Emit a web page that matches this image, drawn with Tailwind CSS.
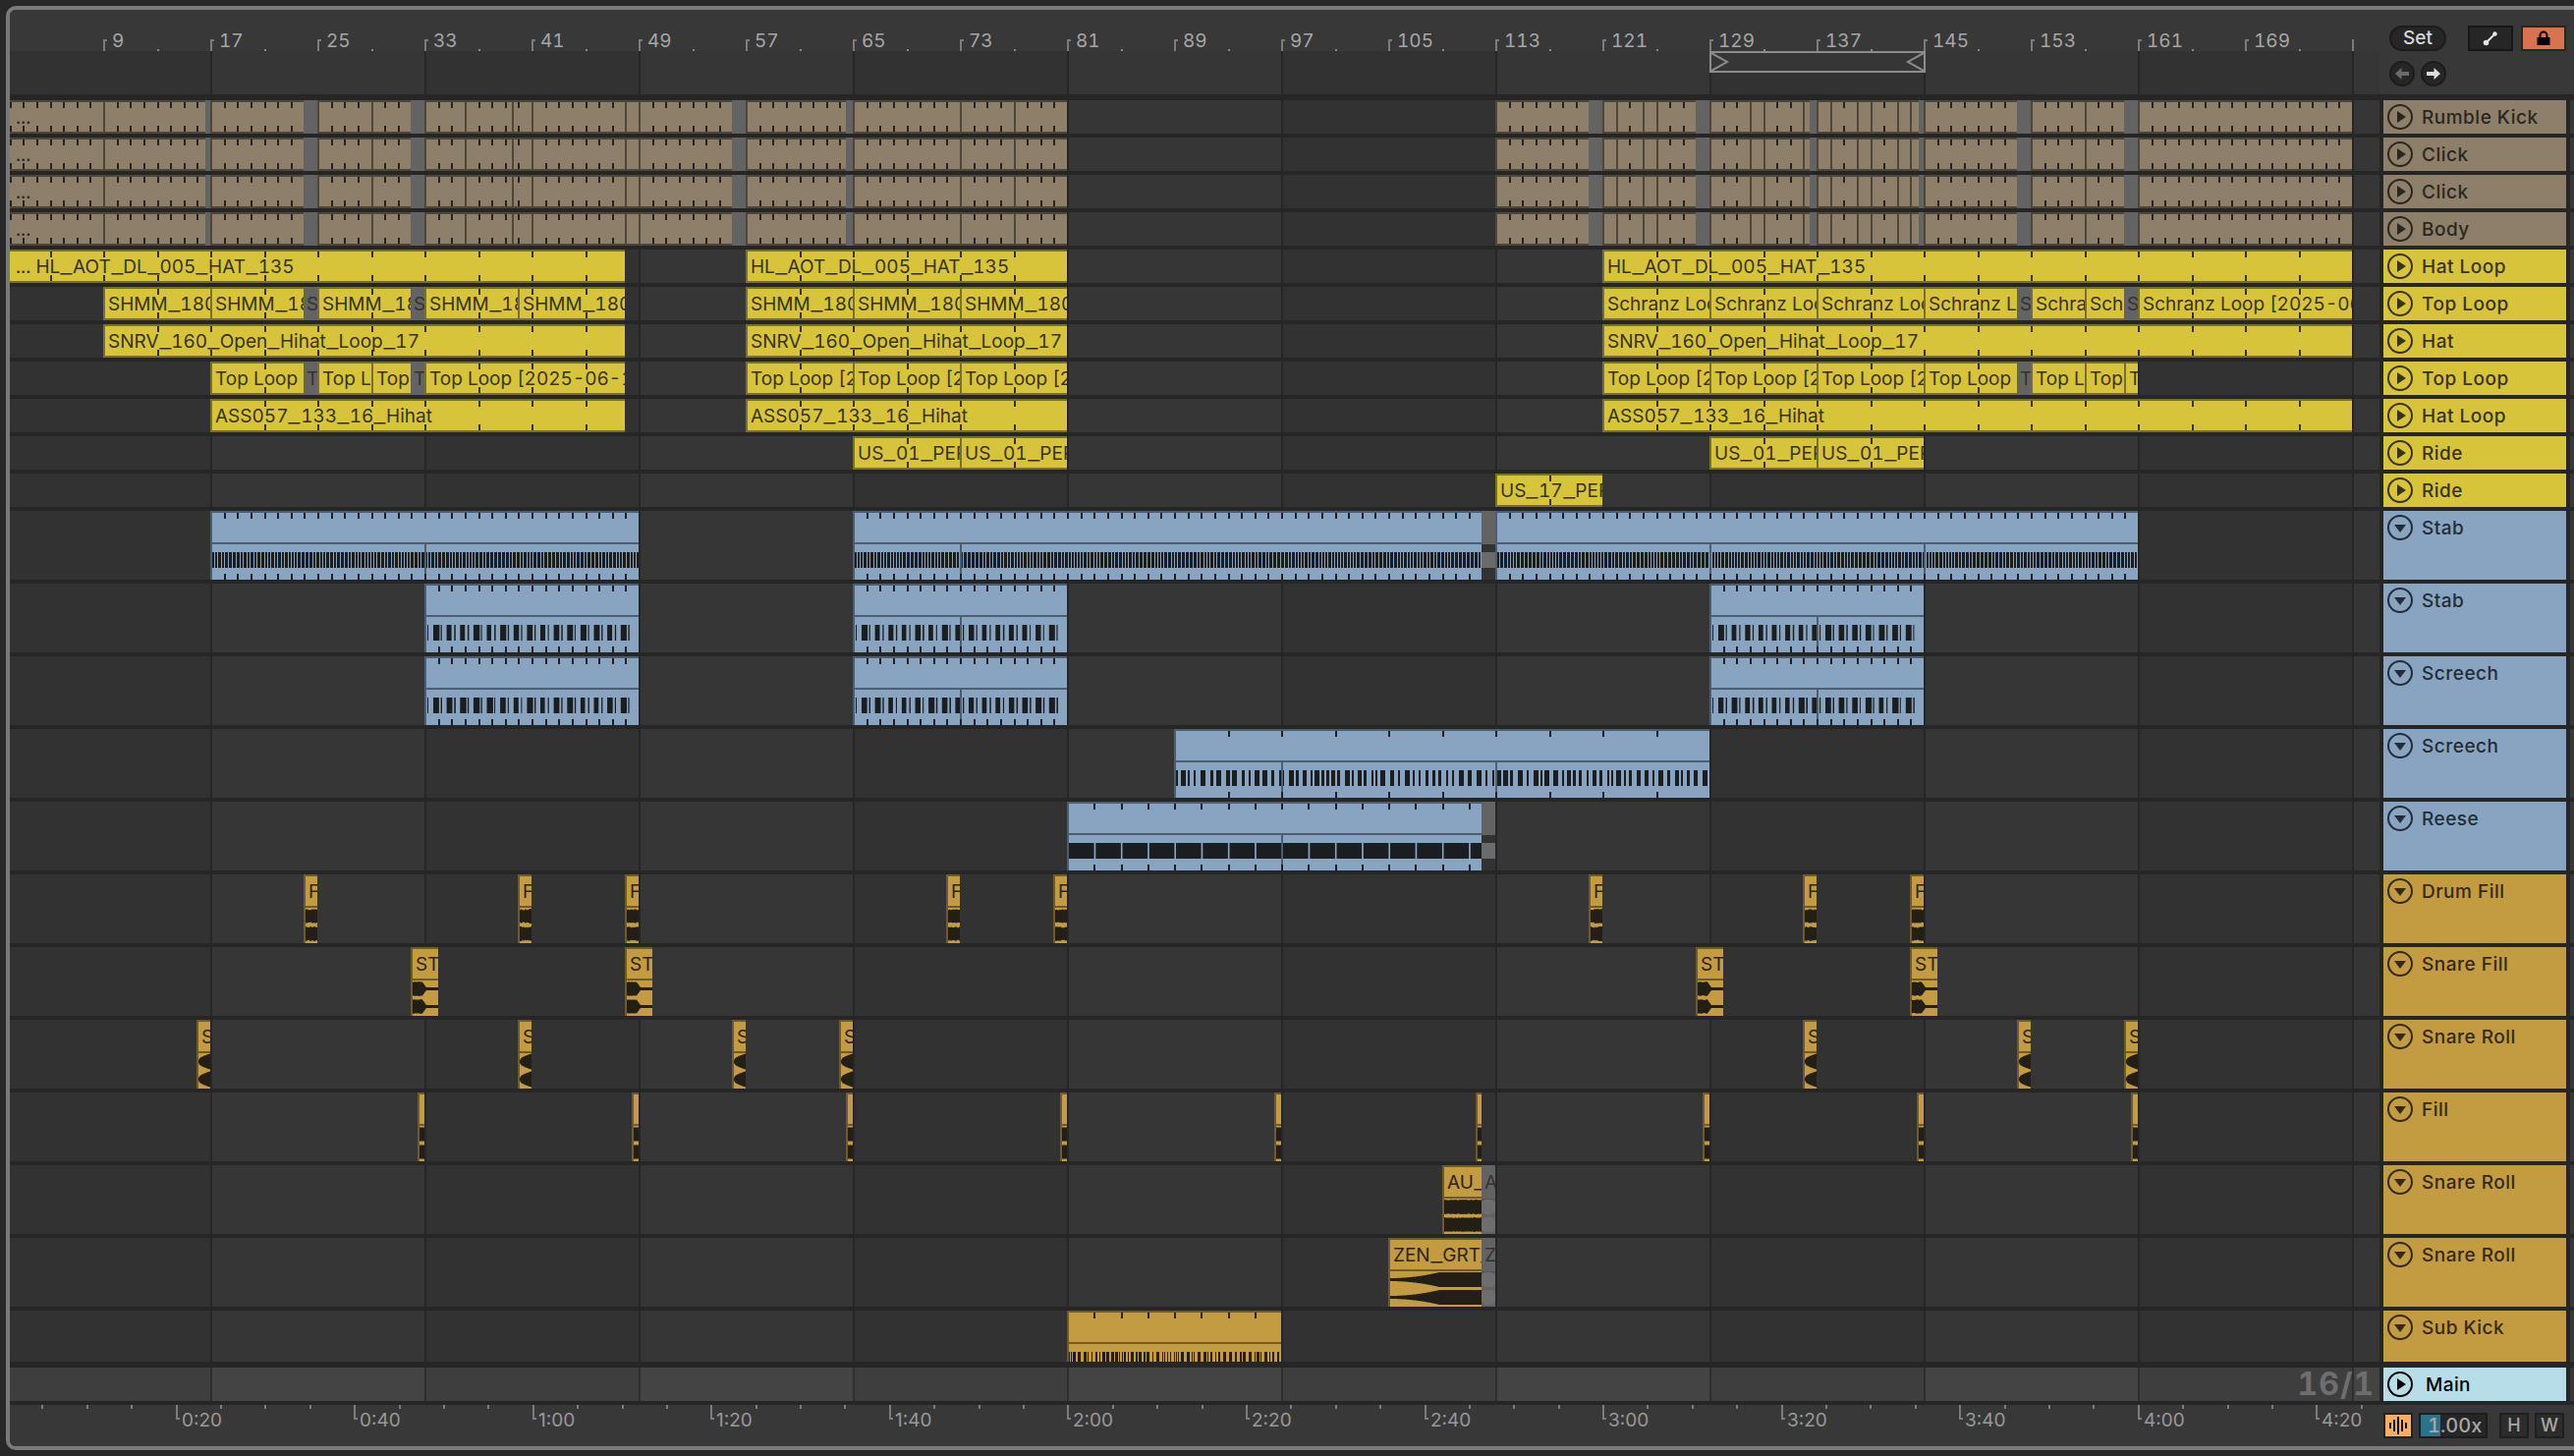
<!DOCTYPE html>
<html>
<head>
<meta charset="utf-8">
<title>Arrangement</title>
<script src="https://cdn.jsdelivr.net/npm/@tailwindcss/browser@4"></script>
</head>
<body class="bg-[#282828] font-[Inter,sans-serif] overflow-hidden">
<div class="w-[2620px] h-[1482px] pt-[6px] pl-[6px]">
  <div class="w-[2614px] h-[1470px] border-[4px] border-r-0 border-[#7a7a7a] rounded-l-[10px] bg-[#262626] overflow-hidden flex flex-col">

    <!-- beat ruler + locators -->
    <div class="flex h-[86px] shrink-0 bg-[#383838]">
      <div id="overview" class="relative w-[2412px] h-[86px]"></div>
      <div class="flex flex-col gap-[10px] pl-[10px] pt-[16px]">
        <div class="flex items-center">
          <div class="w-[58px] h-[26px] rounded-full bg-[#262626] border-2 border-[#1c1c1c] text-[#d6d6d6] text-[19px] font-medium leading-[22px] text-center">Set</div>
          <div class="ml-[22px] w-[46px] h-[26px] bg-[#262626] border-2 border-[#171717] flex items-center justify-center">
            <svg width="16" height="16" viewBox="0 0 16 16"><path d="M3 13 13 3" stroke="#e6e6e6" stroke-width="2"/><circle cx="3.5" cy="12.5" r="2.8" fill="#e6e6e6"/><circle cx="12.5" cy="3.5" r="2.2" fill="#e6e6e6"/></svg>
          </div>
          <div class="ml-[8px] w-[46px] h-[26px] bg-[#d9724f] border-2 border-[#262626] flex items-center justify-center">
            <svg width="16" height="16" viewBox="0 0 16 16"><path d="M4.5 7V5a3.5 3.5 0 0 1 7 0v2" fill="none" stroke="#000" stroke-width="2"/><rect x="1.500" y="7" width="13" height="8" fill="#000"/></svg>
          </div>
        </div>
        <div class="flex gap-[6px]">
          <div class="w-[26px] h-[26px] rounded-full bg-[#262626] border-2 border-[#1c1c1c] flex items-center justify-center">
            <svg width="16" height="14" viewBox="0 0 16 14"><path d="M7.500 1 1 7l6.500 6V9H15V5H7.500z" fill="#6b6b6b"/></svg>
          </div>
          <div class="w-[26px] h-[26px] rounded-full bg-[#262626] border-2 border-[#1c1c1c] flex items-center justify-center">
            <svg width="16" height="14" viewBox="0 0 16 14"><path d="M8.500 1 15 7l-6.500 6V9H1V5h7.500z" fill="#dcdcdc"/></svg>
          </div>
        </div>
      </div>
    </div>

    <!-- tracks -->
    <div id="tracks" class="flex flex-col gap-[4px] mt-[6px]"></div>

    <!-- main track -->
    <div class="flex h-[34px] mt-[6px] shrink-0">
      <div id="mainlane" class="relative w-[2412px] h-[34px] flex">
        <div class="absolute right-[5px] top-0 z-10 h-[34px] leading-[34px] text-[32px] font-bold tabular-nums tracking-[1px] text-[#6e6e6e]">16/1</div>
      </div>
      <div class="ml-[4px] w-[186px] h-[34px] bg-[#b7dde9] text-black flex items-start pl-[4px] pt-[4px]">
        <svg class="shrink-0" width="26" height="26" viewBox="0 0 26 26"><circle cx="13" cy="13" r="12" fill="none" stroke="currentColor" stroke-width="2"/><path d="M10 7l9 6-9 6z" fill="currentColor"/></svg>
        <span class="ml-[13px] text-[19px] font-medium leading-[28px] tracking-[0.4px]">Main</span>
      </div>
      <div class="ml-[4px] w-[4px] bg-[#383838]"></div>
    </div>

    <!-- time ruler -->
    <div class="flex h-[42px] mt-[4px] bg-[#383838] shrink-0">
      <div id="timeruler" class="relative w-[2416px] h-[42px]"></div>
      <div class="flex items-start pt-[8px]">
        <div class="w-[30px] h-[26px] bg-[#f5ae62] border-2 border-[#222] flex items-center justify-center">
          <svg width="20" height="18" viewBox="0 0 20 18" fill="#111"><rect x="1" y="6" width="2" height="6"/><rect x="5" y="3" width="2" height="12"/><rect x="9" y="0" width="2" height="18"/><rect x="13" y="3" width="2" height="12"/><rect x="17" y="6" width="2" height="6"/></svg>
        </div>
        <div class="relative ml-[6px] w-[70px] h-[26px] bg-[#262626] border-2 border-[#1c1c1c]">
          <div class="absolute left-0 top-0 w-[20px] h-[22px] bg-[#2e7289]"></div>
          <div class="absolute left-[7px] top-0 h-[22px] leading-[22px] text-[20px] font-medium tabular-nums text-[#a8a8a8]">1.00x</div>
        </div>
        <div class="ml-[12px] w-[30px] h-[26px] bg-[#2c2c2c] border-2 border-[#1f1f1f] text-[#a8a8a8] text-[18px] font-medium leading-[22px] text-center">H</div>
        <div class="ml-[6px] w-[30px] h-[26px] bg-[#2c2c2c] border-2 border-[#1f1f1f] text-[#a8a8a8] text-[18px] font-medium leading-[22px] text-center">W</div>
      </div>
    </div>
  </div>
</div>

<script>
// bar number -> x on screen
const X = b => Math.max(10, Math.round(214 + (b - 17) * 13.625));
const GRID = [214, 432, 650, 868, 1086, 1304, 1522, 1740, 1958, 2176, 2394];

const THEME = {
  tan: { clip: 'bg-[#8e7f6a] border-[#4f463a]', head: 'bg-[#8e7f6a] text-[#2b2720]', tick: 'bg-[#28241d]', line: 'bg-[#4f463a]', text: 'text-[#2b2720]', ink: '#231f17' },
  yellow: { clip: 'bg-[#d7c43b] border-[#77702f]', head: 'bg-[#d7c43b] text-[#38340f]', tick: 'bg-[#35320f]', line: 'bg-[#77702f]', text: 'text-[#38340f]', ink: '#231f17' },
  blue: { clip: 'bg-[#89a4c0] border-[#4d5e72]', head: 'bg-[#89a4c0] text-[#232d38]', tick: 'bg-[#1d2126]', line: 'bg-[#4d5e72]', text: 'text-[#232d38]', ink: '#1b1e21' },
  orange: { clip: 'bg-[#c39b40] border-[#6e5a2b]', head: 'bg-[#c39b40] text-[#352a10]', tick: 'bg-[#2b2410]', line: 'bg-[#6e5a2b]', text: 'text-[#2e2510]', ink: '#231f17' },
};

const tanClips = [[1,16.6],[16.6,17,'','g'],[17,24],[24,25,'','g'],[25,32],[32,33,'','g'],[33,56],[56,57,'','g'],[57,64.5],[64.5,65,'','g'],[65,81],
  [113,120],[120,121,'','g'],[121,128],[128,129,'','g'],[129,136.5],[136.5,137,'','g'],[137,144.6],[144.6,145,'','g'],[145,152],[152,153,'','g'],[153,160],[160,161,'','g'],[161,177]];
tanClips[0][2] = '...';
const tanLines = [9,29,36,39.5,41,48,49,65,73,77,122,124,125,132,133,136,138,140,141,143,144,157];
const L = 'HL_AOT_DL_005_HAT_135', SN = 'SNRV_160_Open_Hihat_Loop_17', AS = 'ASS057_133_16_Hihat';
const SH = 'SHMM_180_Top_Loop_01', SC = 'Schranz Loop [2025-06-12 1]', TL = 'Top Loop [2025-06-12 1]', US = 'US_01_PERC_LOOP';

const TRACKS = [
  { name: 'Rumble Kick', c: 'tan', h: 34, step: 1, lines: tanLines, clips: tanClips },
  { name: 'Click', c: 'tan', h: 34, step: 1, lines: tanLines, clips: tanClips },
  { name: 'Click', c: 'tan', h: 34, step: 1, lines: tanLines, clips: tanClips },
  { name: 'Body', c: 'tan', h: 34, step: 1, lines: tanLines, clips: tanClips },
  { name: 'Hat Loop', c: 'yellow', h: 34, step: 4, clips: [[1,48,'... ' + L],[57,81,L],[121,177,L]] },
  { name: 'Top Loop', c: 'yellow', h: 34, step: 4, clips: [[9,17,SH],[17,24,SH],[24,25,'S','g'],[25,32,SH],[32,33,'S','g'],[33,40,SH],[40,48,SH],[57,65,SH],[65,73,SH],[73,81,SH],
    [121,129,SC],[129,137,SC],[137,145,SC],[145,152,SC],[152,153,'S','g'],[153,157,SC],[157,160,SC],[160,161,'S','g'],[161,177,SC]] },
  { name: 'Hat', c: 'yellow', h: 34, step: 4, clips: [[9,48,SN],[57,81,SN],[121,177,SN]] },
  { name: 'Top Loop', c: 'yellow', h: 34, step: 4, clips: [[17,24,TL],[24,25,'T','g'],[25,29,TL],[29,32,TL],[32,33,'T','g'],[33,48,TL],[57,65,TL],[65,73,TL],[73,81,TL],
    [121,129,TL],[129,137,TL],[137,145,TL],[145,152,TL],[152,153,'T','g'],[153,157,TL],[157,160,TL],[160,161,TL]] },
  { name: 'Hat Loop', c: 'yellow', h: 34, step: 4, clips: [[17,48,AS],[57,81,AS],[121,177,AS]] },
  { name: 'Ride', c: 'yellow', h: 34, step: 4, clips: [[65,73,US],[73,81,US],[129,137,US],[137,145,US]] },
  { name: 'Ride', c: 'yellow', h: 34, step: 4, clips: [[113,121,'US_17_PERC_LOOP']] },
  { name: 'Stab', c: 'blue', h: 70, step: 1, wave: 'dense', seps: [33,73,129,145], clips: [[17,49],[65,112],[112,113,'','g'],[113,161]] },
  { name: 'Stab', c: 'blue', h: 70, step: 1, wave: 'rep', seps: [73,137], clips: [[33,49],[65,81],[129,145]] },
  { name: 'Screech', c: 'blue', h: 70, step: 1, wave: 'rep', seps: [73,137], clips: [[33,49],[65,81],[129,145]] },
  { name: 'Screech', c: 'blue', h: 70, step: 4, wave: 'mid', seps: [97,113], clips: [[89,129]] },
  { name: 'Reese', c: 'blue', h: 70, step: 2, wave: 'solid', seps: [97], clips: [[81,112],[112,113,'','g']] },
  { name: 'Drum Fill', c: 'orange', h: 70, wave: 'F', clips: [24,40,48,72,80,120,136,144].map(b => [b,b+1,'Fill']) },
  { name: 'Snare Fill', c: 'orange', h: 70, wave: 'ST', clips: [32,48,128,144].map(b => [b,b+2,'STK']) },
  { name: 'Snare Roll', c: 'orange', h: 70, wave: 'S', clips: [16,40,56,64,136,152,160].map(b => [b,b+1,'SN']) },
  { name: 'Fill', c: 'orange', h: 70, wave: 'R', clips: [32.5,48.5,64.5,80.5,96.5,111.5,128.5,144.5,160.5].map(b => [b,b+0.5,'']) },
  { name: 'Snare Roll', c: 'orange', h: 70, wave: 'AU', clips: [[109,112,'AU_SNARE'],[112,113,'A','g']] },
  { name: 'Snare Roll', c: 'orange', h: 70, wave: 'ZEN', clips: [[105,112,'ZEN_GRT_SNARE'],[112,113,'Z','g']] },
  { name: 'Sub Kick', c: 'orange', h: 52, step: 2, noBottom: true, wave: 'comb', clips: [[81,97]] },
];

// small seeded random, the same wave on every run
function rnd(seed) { let s = seed; return () => (s = (s * 16807) % 2147483647) / 2147483647; }

function stripes(w, y, h, r, wMin, wMax, gMin, gMax) {
  let d = '', x = 0;
  while (x < w) {
    const bw = wMin + Math.floor(r() * (wMax - wMin + 1));
    d += 'M' + x + ' ' + y + 'h' + Math.min(bw, w - x) + 'v' + h + 'h-' + Math.min(bw, w - x) + 'z';
    x += bw + gMin + Math.floor(r() * (gMax - gMin + 1));
  }
  return d;
}

// two channel shape, f gives half the height at x
function lobes(w, f) {
  let d = '';
  for (const c of [8.5, 26.5]) {
    let top = '', bot = '';
    for (let x = 0; x <= w; x++) { const v = f(x); top += (x ? 'L' : 'M') + x + ' ' + (c - v).toFixed(1); bot = 'L' + x + ' ' + (c + v).toFixed(1) + bot; }
    d += top + bot + 'z';
  }
  return d;
}

function waveSvg(kind, w, ink, seed) {
  const r = rnd(seed + 11);
  let d = '';
  if (kind === 'dense') d = stripes(w, 8, 16, r, 2, 3, 1, 1);
  if (kind === 'rep') {
    // the same short hit on every bar
    for (let x = 0; x < w; x += 13.625) {
      const a = 1 + r() * 0.6, b = 4.500 + r() * 2;
      if (x + 1 < w) d += 'M' + (x + 1).toFixed(1) + ' 8h' + a.toFixed(1) + 'v16h-' + a.toFixed(1) + 'z';
      if (x + 7 + b < w) d += 'M' + (x + 7).toFixed(1) + ' 8h' + b.toFixed(1) + 'v16h-' + b.toFixed(1) + 'z';
    }
  }
  if (kind === 'mid') d = stripes(w, 8, 16, r, 2, 5, 2, 5);
  if (kind === 'solid') {
    for (let x = 0; x < w; x += 27.25) d += 'M' + x.toFixed(1) + ' 8h' + Math.min(25.6, w - x).toFixed(1) + 'v16h-' + Math.min(25.6, w - x).toFixed(1) + 'z';
  }
  if (kind === 'comb') d = stripes(w, 8, 10, r, 1, 3, 1, 3);
  if (kind === 'F') d = lobes(w, x => 6 + r() * 1.6);
  if (kind === 'ST') d = lobes(w, x => x < 10 ? 6.500 + r() : x < 14 ? 7 - (x - 10) * 1.4 : 1.500);
  if (kind === 'S') d = lobes(w, x => 1 + 7 * Math.sqrt(x / Math.max(w, 1)));
  if (kind === 'R') d = lobes(w, x => 7);
  if (kind === 'AU') d = lobes(w, x => 6.600 + r());
  if (kind === 'ZEN') d = lobes(w, x => x < 50 ? 1.500 + Math.pow(x / 50, 2) * 6 : 7.500);
  return '<svg class="absolute left-0 top-[32px]" width="' + w + '" height="36" viewBox="0 0 ' + w + ' 36"><path d="' + d + '" fill="' + ink + '"/></svg>';
}

function columns(main) {
  let h = '', prev = 10;
  GRID.concat([2422]).forEach((g, i) => {
    const end = i < GRID.length ? g + 2 : 2422;
    const bg = main ? (i % 2 ? 'bg-[#444444]' : 'bg-[#3e3e3e]') : (i % 2 ? 'bg-[#363636]' : 'bg-[#323232]');
    const bd = i < GRID.length ? (main ? 'border-r-2 border-[#2e2e2e]' : 'border-r-2 border-[#262626]') : '';
    h += '<div class="h-full box-border ' + bg + ' ' + bd + '" style="width:' + (end - prev) + 'px"></div>';
    prev = end;
  });
  return h;
}

// the underscores of the clip font are wider than Inter's
function clipText(s) {
  return s.replace(/_/g, '<span class="inline-block mx-[2px] scale-x-[1.4]">_</span>');
}

function clipHtml(t, clip, idx) {
  const th = THEME[t.c], s = clip[0], e = clip[1], title = clip[2] || '', gap = clip[3] === 'g';
  const x0 = X(s), w = X(e) - x0, place = 'left:' + (x0 - 10) + 'px;width:' + w + 'px';
  const small = t.h === 34;
  if (gap) {
    if (!small && t.c === 'blue') {
      return '<div class="absolute top-0 h-[34px] bg-[#636363]" style="' + place + '"></div><div class="absolute top-[42px] h-[16px] bg-[#6b6b6b]" style="' + place + '"></div>';
    }
    let inner = title ? '<span class="absolute left-[3px] top-[1px] h-[34px] leading-[34px] text-[19px] text-[#333333] whitespace-nowrap">' + title + '</span>' : '';
    if (!small) inner += '<div class="absolute left-0 right-0 top-[34px] h-[2px] bg-[#565656]"></div><div class="absolute left-0 right-0 top-[35px] h-[15px] rounded-[5px] bg-[#6e6e6e]"></div><div class="absolute left-0 right-0 top-[53px] h-[15px] rounded-[5px] bg-[#6e6e6e]"></div>';
    return '<div class="absolute top-0 h-full overflow-hidden bg-[#636363]" style="' + place + '">' + inner + '</div>';
  }
  const first = s === 1;
  let h = '<div class="absolute top-0 h-full overflow-hidden box-border border-t-2 ' + (first ? '' : 'border-l-2 ') + (small ? 'border-b-2 ' : '') + th.clip + '" style="' + place + '">';
  const off = first ? 0 : 2;
  if (t.step) {
    for (let b = Math.ceil(s + 0.01); b < e; b++) {
      if ((b - 1) % t.step) continue;
      const tx = X(b) - x0 - off;
      h += '<div class="absolute top-0 w-[2px] h-[6px] ' + th.tick + '" style="left:' + tx + 'px"></div>';
      if (!t.noBottom) h += '<div class="absolute bottom-0 w-[2px] h-[6px] ' + th.tick + '" style="left:' + tx + 'px"></div>';
    }
  }
  if (t.lines) for (const b of t.lines) if (b > s && b < e) h += '<div class="absolute top-0 bottom-0 w-[2px] ' + th.line + '" style="left:' + (X(b) - x0 - off) + 'px"></div>';
  if (!small) {
    h += '<div class="absolute left-0 right-0 top-[30px] h-[2px] ' + th.line + '"></div>';
    h += waveSvg(t.wave, w - off, th.ink, idx * 37 + 5);
    if (t.seps) for (const b of t.seps) if (b > s && b < e) h += '<div class="absolute top-[32px] h-[30px] w-[2px] ' + th.line + '" style="left:' + (X(b) - x0 - off) + 'px"></div>';
  }
  if (title) h += '<span class="absolute top-[1px] h-[30px] leading-[30px] whitespace-nowrap text-[19px] tabular-nums ' + (first ? 'left-[6px] ' : 'left-[3px] ') + th.text + '">' + clipText(title) + '</span>';
  return h + '</div>';
}

function icon(down) {
  return '<svg class="shrink-0" width="26" height="26" viewBox="0 0 26 26"><circle cx="13" cy="13" r="12" fill="none" stroke="currentColor" stroke-width="2"/><path d="' + (down ? 'M7 10h12l-6 8z' : 'M10 7l9 6-9 6z') + '" fill="currentColor"/></svg>';
}

let out = '';
TRACKS.forEach((t, ti) => {
  out += '<div class="flex shrink-0" style="height:' + t.h + 'px">';
  out += '<div class="relative flex w-[2412px] h-full">' + columns(false);
  t.clips.forEach((c, i) => { out += clipHtml(t, c, ti * 17 + i); });
  out += '</div>';
  out += '<div class="ml-[4px] w-[186px] h-full flex items-start pl-[4px] pt-[4px] ' + THEME[t.c].head + '">' + icon(t.h > 34) + '<span class="ml-[9px] text-[19px] font-medium leading-[28px] tracking-[0.5px]">' + t.name + '</span></div>';
  out += '<div class="ml-[4px] w-[4px] h-full bg-[#383838]"></div></div>';
});
document.getElementById('tracks').innerHTML = out;
document.getElementById('mainlane').insertAdjacentHTML('afterbegin', columns(true));

// beat ruler: top band with numbers, locator band with the grid under it
let ov = '<div class="absolute left-0 top-[42px] flex w-full h-[44px]">' + columns(false) + '</div>';
for (let b = 9; b <= 169; b += 8) {
  const x = X(b) - 10;
  ov += '<div class="absolute top-[30px] w-[2px] h-[12px] bg-[#7c7c7c]" style="left:' + x + 'px"></div>';
  ov += '<div class="absolute top-[30px] w-[4px] h-[2px] bg-[#7c7c7c]" style="left:' + x + 'px"></div>';
  ov += '<div class="absolute top-[22px] h-[20px] leading-[20px] text-[19px] tabular-nums text-[#a6a6a6]" style="left:' + (x + 9) + 'px">' + b + '</div>';
  ov += '<div class="absolute top-[40px] w-[2px] h-[2px] bg-[#8a8a8a]" style="left:' + (X(b + 4) - 10) + 'px"></div>';
}
ov += '<div class="absolute top-[30px] w-[2px] h-[12px] bg-[#7c7c7c]" style="left:' + (2394 - 10) + 'px"></div>';
// loop brace 129 - 145
ov += '<div class="absolute left-[1730px] top-[42px] w-[220px] h-[22px] box-border border-2 border-[#8c8c8c] bg-[#363636]">'
  + '<svg class="absolute left-0 top-0" width="216" height="18" viewBox="0 0 216 18"><path d="M0 0 16 9 0 18" fill="none" stroke="#8c8c8c" stroke-width="2"/><path d="M216 0 200 9 216 18" fill="none" stroke="#8c8c8c" stroke-width="2"/></svg></div>';
document.getElementById('overview').innerHTML = ov;

// time ruler
let tr = '';
const T0 = 178.6, STEP = 45.39;
const names = ['0:20','0:40','1:00','1:20','1:40','2:00','2:20','2:40','3:00','3:20','3:40','4:00','4:20'];
for (let k = -3; T0 + k * STEP < 2410; k++) {
  const x = Math.round(T0 + k * STEP) - 10;
  if (k >= 0 && k % 4 === 0) {
    tr += '<div class="absolute top-0 w-[2px] h-[15px] bg-[#7c7c7c]" style="left:' + x + 'px"></div>';
    tr += '<div class="absolute top-[13px] w-[4px] h-[2px] bg-[#7c7c7c]" style="left:' + x + 'px"></div>';
    tr += '<div class="absolute top-[6px] h-[20px] leading-[20px] text-[19px] text-[#989898]" style="left:' + (x + 6) + 'px">' + names[k / 4] + '</div>';
  } else {
    tr += '<div class="absolute top-0 w-[2px] h-[4px] bg-[#7c7c7c]" style="left:' + x + 'px"></div>';
  }
}
document.getElementById('timeruler').innerHTML = tr;
</script>
</body>
</html>
